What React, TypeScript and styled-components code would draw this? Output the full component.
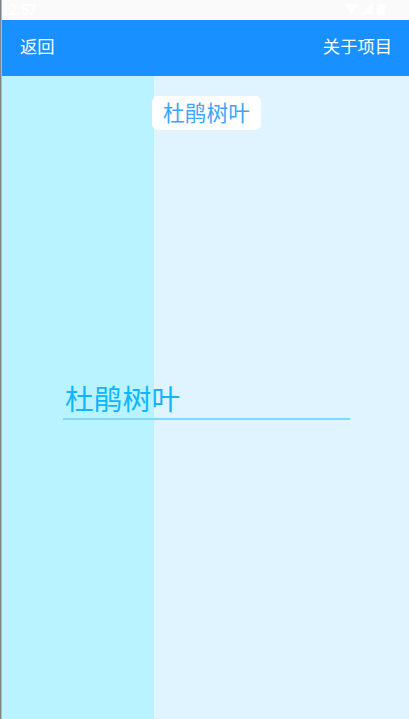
import React from "react";
import styled, { createGlobalStyle } from "styled-components";

const Global = createGlobalStyle`
  html, body { margin: 0; padding: 0; height: 100%; overflow: hidden; background: #e0f4ff; }
  #root { height: 100%; }
  * { box-sizing: border-box; }
`;

const Screen = styled.div`
  display: flex;
  width: 409px;
  height: 719px;
  font-family: "Noto Sans CJK SC", "Roboto", sans-serif;
`;

const EdgeStrip = styled.div`
  width: 2px;
  flex: none;
  background: linear-gradient(
    90deg,
    #7f8487 0 1px,
    #b4b8ba 1px 2px
  );
`;

const Device = styled.div`
  flex: 1;
  display: flex;
  flex-direction: column;
  min-width: 0;
`;

const StatusBar = styled.div`
  height: 20px;
  flex: none;
  display: flex;
  align-items: center;
  justify-content: space-between;
  padding: 0 24px 0 7px;
  background: #fafafa;
  color: #ffffff;
  font-family: "Roboto", sans-serif;
  font-size: 14px;
  font-weight: 500;
`;

const StatusIcons = styled.div`
  display: flex;
  align-items: center;
  gap: 4px;
  margin-top: -3px;
  svg { display: block; }
`;

const NavBar = styled.div`
  height: 56px;
  flex: none;
  display: flex;
  align-items: center;
  justify-content: space-between;
  padding: 0 17px 5px 18px;
  background: #1890ff;
  color: #ffffff;
  font-size: 17.3px;
`;

const Body = styled.div`
  flex: 1;
  display: grid;
  grid-template-columns: 152px 1fr;
  position: relative;
  background: #e0f4ff;
`;

const LeftPane = styled.div`
  background: #b8f3ff;
`;

const RightPane = styled.div`
  background: #e0f4ff;
`;

const Overlay = styled.div`
  position: absolute;
  inset: 0;
  padding-left: 2px;
  display: flex;
  flex-direction: column;
  align-items: center;
`;

const Chip = styled.div`
  margin-top: 20px;
  height: 34px;
  padding: 0 0 4px;
  width: 109px;
  display: flex;
  align-items: center;
  justify-content: center;
  border-radius: 6px;
  background: #ffffff;
  color: #40a4fa;
  font-size: 21.7px;
`;

const Field = styled.div`
  margin-top: 249px;
  width: 287px;
  height: 41px;
  padding: 0 0 3px 2px;
  display: flex;
  align-items: center;
  border-bottom: 2px solid #80d8ff;
  color: #10b4ff;
  font-size: 28.8px;
`;

export default function App() {
  return (
    <Screen>
      <Global />
      <EdgeStrip />
      <Device>
        <StatusBar>
          <span>2:57</span>
          <StatusIcons>
            <svg width="13" height="11" viewBox="0 0 13 11"><path d="M0 2C4 -0.5 9 -0.5 13 2L6.5 11Z" fill="#ffffff" /></svg>
            <svg width="11" height="11" viewBox="0 0 11 11"><path d="M11 0V11H0Z" fill="#ffffff" /></svg>
            <svg width="8" height="12" viewBox="0 0 8 12"><path d="M2.5 0H5.5V1.5H8V12H0V1.5H2.5Z" fill="#ffffff" /></svg>
          </StatusIcons>
        </StatusBar>
        <NavBar>
          <span>返回</span>
          <span>关于项目</span>
        </NavBar>
        <Body>
          <LeftPane />
          <RightPane />
          <Overlay>
            <Chip>杜鹃树叶</Chip>
            <Field>杜鹃树叶</Field>
          </Overlay>
        </Body>
      </Device>
    </Screen>
  );
}
